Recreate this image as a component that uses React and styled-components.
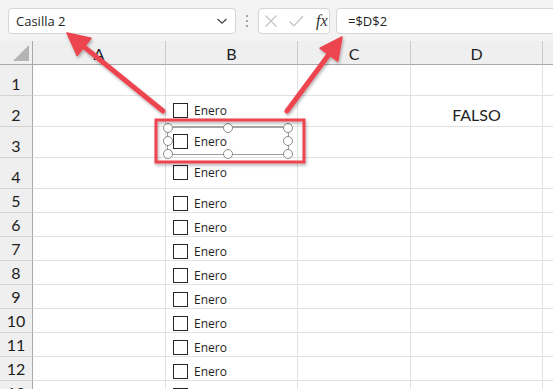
import React from "react";
import styled, { createGlobalStyle } from "styled-components";

const Global = createGlobalStyle`
  html, body { margin: 0; padding: 0; background: #fff; overflow: hidden; }
  body { font-family: "Open Sans", "Noto Sans", sans-serif; }
`;

const Page = styled.div`
  position: relative;
  width: 553px;
  height: 389px;
  overflow: hidden;
  background: #fff;
`;

const Toolbar = styled.div`
  height: 41px;
  box-sizing: border-box;
  background: #f3f3f3;
  display: flex;
  align-items: flex-start;
  padding: 8px 0 0 8px;
  overflow: hidden;
`;

const Field = styled.div`
  height: 26px;
  box-sizing: border-box;
  background: #fff;
  border: 1px solid #d6d6d6;
  border-radius: 4px;
  display: flex;
  align-items: center;
  flex-shrink: 0;
  font-size: 13px;
  color: #1f1f1f;
  width: ${(p) => p.$w}px;
  margin-left: ${(p) => p.$ml || 0}px;
  padding: 0 ${(p) => p.$px || 0}px;
`;

const NameText = styled.span`
  flex: 1;
`;

const Dots = styled.div`
  width: 22px;
  height: 26px;
  display: flex;
  flex-direction: column;
  align-items: center;
  justify-content: center;
  gap: 3px;
  flex-shrink: 0;
  & > i {
    width: 2px;
    height: 2px;
    background: #8a8a8a;
    border-radius: 1px;
  }
`;

const FxIcons = styled.div`
  display: flex;
  align-items: center;
  gap: 10px;
  padding-left: 5px;
`;

const Fx = styled.span`
  font-family: "Liberation Serif", "DejaVu Serif", serif;
  font-style: italic;
  font-size: 16px;
  color: #333;
  margin-left: 2px;
`;

const Sheet = styled.div`
  position: relative;
  display: grid;
  grid-template-columns: 33px 133px 132px 113px 132px 120px;
  grid-template-rows: 24px repeat(4, 31px) repeat(9, 24px);
`;

const Corner = styled.div`
  position: relative;
  background: #efefef;
  box-sizing: border-box;
  border-right: 1px solid #a9a9a9;
  border-bottom: 1px solid #a9a9a9;
  &::after {
    content: "";
    position: absolute;
    right: 3px;
    bottom: 3px;
    width: 0;
    height: 0;
    border-left: 16px solid transparent;
    border-bottom: 16px solid #b4b4b4;
  }
`;

const ColHead = styled.div`
  background: #efefef;
  box-sizing: border-box;
  border-bottom: 1px solid #a9a9a9;
  border-right: 1px solid #c9c9c9;
  display: flex;
  align-items: center;
  justify-content: center;
  font-family: Lato, "Open Sans", sans-serif;
  font-size: 16px;
  color: #1e1e1e;
  padding-top: 1px;
`;

const RowHead = styled.div`
  background: #efefef;
  box-sizing: border-box;
  border-right: 1px solid #a9a9a9;
  border-bottom: 1px solid #d2d2d2;
  display: flex;
  align-items: flex-end;
  justify-content: center;
  padding-bottom: 2px;
  font-family: Lato, "Open Sans", sans-serif;
  font-size: 16px;
  color: #1e1e1e;
`;

const Cell = styled.div`
  box-sizing: border-box;
  border-right: 1px solid #e1e1e1;
  border-bottom: 1px solid #e1e1e1;
  display: flex;
  align-items: ${(p) => (p.$top ? "flex-start" : "flex-end")};
  justify-content: ${(p) => (p.$center ? "center" : "flex-start")};
  padding: ${(p) => (p.$top ? "7px 0 0 7px" : "0 0 2px 0")};
  font-family: Lato, "Open Sans", sans-serif;
  font-size: 16px;
  color: #1e1e1e;
  min-width: 0;
  overflow: hidden;
`;

const CheckControl = styled.label`
  display: flex;
  align-items: center;
  gap: 6px;
  font-family: "Open Sans", "Noto Sans", sans-serif;
  font-size: 12px;
  color: #1f1f1f;
  line-height: 15px;
`;

const Box = styled.span`
  width: 15px;
  height: 15px;
  box-sizing: border-box;
  border: 1px solid #262626;
  background: #fff;
  flex-shrink: 0;
`;

const Frame = styled.div`
  position: absolute;
  left: 167px;
  top: 85px;
  width: 122px;
  height: 29px;
  box-sizing: border-box;
  border: 1px solid #9a9a9a;
  border-top: 2px solid #a6a6a6;
  pointer-events: none;
`;

const Handle = styled.span`
  position: absolute;
  width: 10px;
  height: 10px;
  box-sizing: border-box;
  border: 1.5px solid #8a8a8a;
  background: #fff;
  border-radius: 50%;
  left: ${(p) => p.$x}%;
  top: ${(p) => p.$y}%;
  transform: translate(-50%, -50%);
`;

const Overlay = styled.svg`
  position: absolute;
  left: 0;
  top: 0;
  width: 553px;
  height: 389px;
  pointer-events: none;
  overflow: visible;
`;

const cols = ["A", "B", "C", "D", ""];
const rows = [
  { n: 1 },
  { n: 2, cb: true, d: "FALSO" },
  { n: 3, cb: true },
  { n: 4, cb: true },
  ...Array.from({ length: 9 }, (_, i) => ({ n: 5 + i, cb: true })),
];

const handles = [
  [0, 0], [50, 0], [100, 0],
  [0, 50], [100, 50],
  [0, 100], [50, 100], [100, 100],
];

const RED = "#ec454f";

function Arrow({ x1, y1, x2, y2 }) {
  const dx = x2 - x1;
  const dy = y2 - y1;
  const len = Math.hypot(dx, dy);
  const ux = dx / len;
  const uy = dy / len;
  const hl = 22;
  const hw = 11;
  const bx = x2 - ux * hl;
  const by = y2 - uy * hl;
  const px = -uy;
  const py = ux;
  return (
    <g>
      <line x1={x1} y1={y1} x2={bx + ux * 2} y2={by + uy * 2} stroke={RED} strokeWidth="5" strokeLinecap="round" />
      <polygon
        points={`${x2},${y2} ${bx + px * hw},${by + py * hw} ${bx - px * hw},${by - py * hw}`}
        fill={RED}
        stroke={RED}
        strokeWidth="1.5"
        strokeLinejoin="round"
      />
    </g>
  );
}

export default function App() {
  return (
    <Page>
      <Global />
      <Toolbar>
        <Field $w={228} $px={7}>
          <NameText>Casilla 2</NameText>
          <svg width="12" height="8" viewBox="0 0 12 8">
            <path d="M1.5 2 L6 6.2 L10.5 2" fill="none" stroke="#444" strokeWidth="1.3" />
          </svg>
        </Field>
        <Dots><i /><i /><i /></Dots>
        <Field $w={72}>
          <FxIcons>
            <svg width="14" height="14" viewBox="0 0 14 14">
              <path d="M1.5 1.5 L12.5 12.5 M12.5 1.5 L1.5 12.5" stroke="#c2c2c2" strokeWidth="1.2" fill="none" />
            </svg>
            <svg width="16" height="14" viewBox="0 0 16 14">
              <path d="M1.5 7.5 L6 12 L15 2" stroke="#c2c2c2" strokeWidth="1.2" fill="none" />
            </svg>
            <Fx>fx</Fx>
          </FxIcons>
        </Field>
        <Field $w={260} $ml={6} $px={11}>=$D$2</Field>
      </Toolbar>
      <Sheet>
        <Corner />
        {cols.map((c, i) => (
          <ColHead key={i}>{c}</ColHead>
        ))}
        {rows.map((r) => (
          <React.Fragment key={r.n}>
            <RowHead>{r.n}</RowHead>
            <Cell />
            <Cell $top>
              {r.cb && (
                <CheckControl>
                  <Box />
                  Enero
                </CheckControl>
              )}
            </Cell>
            <Cell />
            <Cell $center>{r.d || ""}</Cell>
            <Cell />
          </React.Fragment>
        ))}
        <Frame>
          {handles.map(([x, y], i) => (
            <Handle key={i} $x={x} $y={y} />
          ))}
        </Frame>
      </Sheet>
      <Overlay viewBox="0 0 553 389">
        <defs>
          <filter id="sh" x="-20%" y="-20%" width="140%" height="140%">
            <feDropShadow dx="1" dy="2" stdDeviation="1.5" floodColor="#000" floodOpacity="0.3" />
          </filter>
        </defs>
        <g filter="url(#sh)">
          <rect x="156" y="120" width="148" height="42" fill="none" stroke={RED} strokeWidth="3" />
          <Arrow x1={163} y1={111} x2={67} y2={33} />
          <Arrow x1={287} y1={111} x2={342} y2={37} />
        </g>
      </Overlay>
    </Page>
  );
}
